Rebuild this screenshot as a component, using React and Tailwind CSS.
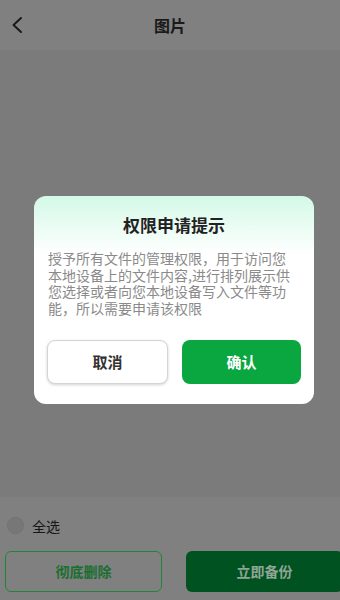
import React from "react";

const font = { fontFamily: '"Noto Sans CJK SC", "Noto Sans", sans-serif' };

export default function App() {
  return (
    <div
      className="relative w-[340px] h-[600px] overflow-hidden flex flex-col bg-[#808080]"
      style={font}
    >
      {/* Header */}
      <div className="relative h-[50px] flex items-center justify-center bg-[#808080] shrink-0">
        <svg
          className="absolute left-[10px] top-[16px]"
          width="14"
          height="18"
          viewBox="0 0 14 18"
          fill="none"
        >
          <path d="M11 2 L3.5 9 L11 16" stroke="#1a1a1a" strokeWidth="2" strokeLinecap="round" strokeLinejoin="round" />
        </svg>
        <span className="text-[16px] font-bold text-[#1a1a1a] leading-none">图片</span>
      </div>

      {/* Content */}
      <div className="flex-1 bg-[#7b7b7b]" />

      {/* Bottom bar */}
      <div className="bg-[#808080] pt-[20px] pb-[8px] shrink-0">
        <div className="flex items-center h-[17px] pl-[7px]">
          <div className="w-[17px] h-[17px] rounded-full bg-[#777777] border border-[#727272]" />
          <span className="ml-[8px] text-[14px] text-[#161616] leading-none">全选</span>
        </div>
        <div className="flex mt-[17px] pl-[5px] gap-[24px] w-[360px]">
          <div className="w-[157px] h-[41px] shrink-0 rounded-[6px] border-[1.5px] border-[#22843c] flex items-center justify-center">
            <span className="text-[14px] font-bold text-[#1a6e30]">彻底删除</span>
          </div>
          <div className="w-[157px] h-[41px] shrink-0 rounded-[6px] bg-[#005320] flex items-center justify-center">
            <span className="text-[14px] font-bold text-[#8fa595]">立即备份</span>
          </div>
        </div>
      </div>

      {/* Dialog */}
      <div className="absolute left-[34px] top-[196px] w-[280px] rounded-[12px] bg-gradient-to-b from-[#d3f9e7] via-white via-[28%] to-white pt-[17px] pb-[20px]">
        <div className="text-center text-[17px] font-bold text-[#222222] leading-[24px]">
          权限申请提示
        </div>
        <div className="mt-[13px] px-[14px]">
          <p className="w-[246px] text-[14px] leading-[16.5px] text-[#8a8a8a]">
            授予所有文件的管理权限，用于访问您本地设备上的文件内容,进行排列展示供您选择或者向您本地设备写入文件等功能，所以需要申请该权限
          </p>
        </div>
        <div className="mt-[24px] flex gap-[14px] px-[13px]">
          <div className="flex-1 h-[44px] rounded-[8px] bg-white border border-[#d4d4d4] shadow-[0_1px_3px_rgba(0,0,0,0.18)] flex items-center justify-center">
            <span className="text-[15px] font-bold text-[#333333]">取消</span>
          </div>
          <div className="flex-1 h-[44px] rounded-[8px] bg-[#0aa640] flex items-center justify-center">
            <span className="text-[15px] font-bold text-white">确认</span>
          </div>
        </div>
      </div>
    </div>
  );
}
